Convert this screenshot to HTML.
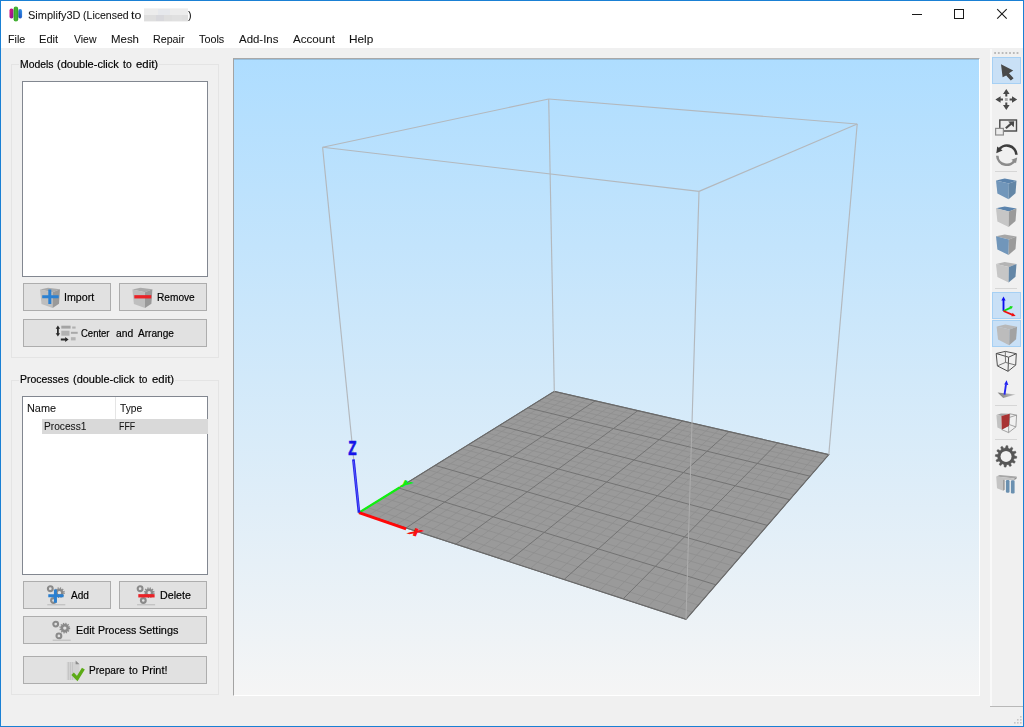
<!DOCTYPE html>
<html lang="en"><head><meta charset="utf-8"><title>Simplify3D</title>
<style>
html,body{margin:0;padding:0;}
body{width:1024px;height:727px;overflow:hidden;background:#f0f0f0;position:relative;font-family:"Liberation Sans",sans-serif;font-size:11.8px;color:#000;}
.abs{position:absolute;}
#win{position:absolute;left:0;top:0;width:1022px;height:725px;border:1px solid #1a80d4;z-index:50;pointer-events:none;}
#top{position:absolute;left:1px;top:1px;width:1022px;height:47px;background:#fff;}
.t{position:absolute;white-space:nowrap;line-height:14px;height:14px;transform-origin:0 0;z-index:5;}
.seg{color:#141414;-webkit-text-stroke:0.08px #141414;}
.got{color:#000;-webkit-text-stroke:0.2px #000;}
.grp{position:absolute;border:1px solid #e4e4e4;box-sizing:border-box;}
.gmask{position:absolute;background:#f0f0f0;height:3px;}
.list{position:absolute;background:#fff;border:1px solid #828790;box-sizing:border-box;}
.btn{position:absolute;background:#e1e1e1;border:1px solid #adadad;box-sizing:border-box;height:28px;}
#vp{position:absolute;left:233px;top:58px;width:747px;height:638px;box-sizing:border-box;border-left:1px solid #a3a3a3;border-top:1px solid #a8a8a8;border-right:1px solid #fff;border-bottom:1px solid #fff;background:linear-gradient(to bottom,#aeddff 0%,#f5f5f5 100%);overflow:hidden;}
#vp svg.gl{position:absolute;left:0;top:0;}
svg{overflow:visible;}

</style></head>
<body>
<div id="top"></div>
<svg class="abs" style="left:0;top:0" width="240" height="30" viewBox="0 0 240 30">
<defs><linearGradient id="gm" x1="0" y1="0" x2="1" y2="1"><stop offset="0" stop-color="#e0107c"/><stop offset="1" stop-color="#7a189a"/></linearGradient><linearGradient id="gb" x1="1" y1="0" x2="0" y2="1"><stop offset="0" stop-color="#38a0f0"/><stop offset="1" stop-color="#1838b0"/></linearGradient><linearGradient id="gg" x1="0" y1="0" x2="1" y2="0"><stop offset="0" stop-color="#2c9c24"/><stop offset="0.5" stop-color="#4cb838"/><stop offset="1" stop-color="#2c9c24"/></linearGradient><filter id="bl" x="-20%" y="-20%" width="140%" height="140%"><feGaussianBlur stdDeviation="0.5"/></filter>
<filter id="bl2" x="-20%" y="-40%" width="140%" height="180%"><feGaussianBlur stdDeviation="0.7"/></filter></defs>
<g filter="url(#bl)">
<rect x="9.5" y="8.6" width="3.9" height="9.9" rx="1.9" fill="url(#gm)"/>
<rect x="18.3" y="9" width="3.8" height="9.5" rx="1.9" fill="url(#gb)"/>
<rect x="13.6" y="6.6" width="4.6" height="14.9" rx="2.3" fill="url(#gg)"/>
</g>
<g filter="url(#bl2)">
<rect x="144" y="8.4" width="44" height="6.8" fill="#ececec"/>
<rect x="144" y="15" width="44" height="6.4" fill="#dedede"/>
<rect x="158" y="9" width="12" height="6" fill="#e6e8ec"/>
<rect x="156" y="15" width="8" height="6" fill="#d8d8dc"/>
<rect x="172" y="15" width="10" height="6" fill="#e0e0e0"/>
</g>
</svg>
<svg class="abs" style="left:905px;top:5px" width="110" height="20" viewBox="905 5 110 20">
<path d="M912 14.5H922" stroke="#1a1a1a" stroke-width="1" fill="none"/>
<rect x="954.5" y="9.5" width="9" height="9" stroke="#1a1a1a" stroke-width="1" fill="none"/>
<path d="M997.2 9.2L1006.7 18.7M1006.7 9.2L997.2 18.7" stroke="#1a1a1a" stroke-width="1.1" fill="none"/>
</svg>

<!-- Models group -->
<div class="grp" style="left:11px;top:64px;width:208px;height:294px"></div>
<div class="gmask" style="left:19px;top:63px;width:140px"></div>
<div class="list" style="left:22px;top:81px;width:186px;height:196px"></div>
<div class="btn" style="left:23px;top:283px;width:88px"></div>
<div class="btn" style="left:119px;top:283px;width:88px"></div>
<div class="btn" style="left:23px;top:319px;width:184px"></div>

<!-- Processes group -->
<div class="grp" style="left:11px;top:380px;width:208px;height:315px"></div>
<div class="gmask" style="left:19px;top:379px;width:156px"></div>
<div class="list" style="left:22px;top:396px;width:186px;height:179px">
 <div class="abs" style="left:92px;top:0;width:1px;height:22px;background:#e5e5e5"></div>
 <div class="abs" style="left:19px;top:22px;width:166px;height:15px;background:#d9d9d9"></div>
</div>
<div class="btn" style="left:23px;top:581px;width:88px"></div>
<div class="btn" style="left:119px;top:581px;width:88px"></div>
<div class="btn" style="left:23px;top:616px;width:184px"></div>
<div class="btn" style="left:23px;top:656px;width:184px"></div>
<svg class="abs" style="left:0;top:0;z-index:4" width="232" height="727" viewBox="0 0 232 727">
<defs>
<filter id="ib" x="-10%" y="-10%" width="120%" height="120%"><feGaussianBlur stdDeviation="0.45"/></filter>
<g id="cube">
 <polygon points="0,1.8 8,0 20,1.5 12.6,4.6" fill="#aaaaaa"/>
 <polygon points="0,1.8 12.6,4.6 12.6,20.4 1.5,16.3" fill="#bebebe"/>
 <polygon points="12.6,4.6 20,1.5 19,16 12.6,20.4" fill="#999999"/>
</g>
<g id="gear3" fill="none" stroke="#8a8a8a">
 <circle cx="4" cy="4.3" r="2.4" stroke-width="2.1"/>
 <circle cx="7.2" cy="16.1" r="2.4" stroke-width="2.1"/>
 <circle cx="13.1" cy="8.3" r="3" stroke-width="2.6"/>
 <circle cx="13.1" cy="8.3" r="4.7" stroke-width="1.4" stroke-dasharray="1.2 1.26"/>
 <path d="M1,20.4H19" stroke="#b8b8b8" stroke-width="1"/>
</g>
</defs>
<g filter="url(#ib)">
<!-- import -->
<use href="#cube" x="40" y="287.7"/>
<path d="M49.8,289.4V304M42.2,296.8H58.7" stroke="#2a80d2" stroke-width="3" fill="none"/>
<!-- remove -->
<use href="#cube" x="132.4" y="287.7"/>
<path d="M134.3,296.8H151.3" stroke="#ea2028" stroke-width="3.3" fill="none"/>
<!-- center & arrange -->
<path d="M57.9,325.4l2.2,3.4h-1.3v4.4h1.3l-2.2,3.4l-2.2,-3.4h1.3v-4.4h-1.3z" fill="#2c2c2c"/>
<path d="M60.8,338.6h4.4v-1.5l3.4,2.4l-3.4,2.4v-1.5h-4.4z" fill="#2c2c2c"/>
<rect x="61.3" y="325.7" width="9.3" height="2.9" fill="#a4a4a4"/>
<rect x="61.3" y="330.7" width="8.2" height="5" fill="#b2b2b2"/>
<rect x="72.2" y="326.5" width="3.4" height="2.1" fill="#b0b0b0"/>
<rect x="70.9" y="331.8" width="6.8" height="2" fill="#a8a8a8"/>
<rect x="70.9" y="337.2" width="4.7" height="3.2" fill="#b4b4b4"/>
<!-- add -->
<use href="#gear3" x="46.3" y="584.4"/>
<path d="M55.4,589.5V602.7M48.3,595.8H63.5" stroke="#2a7fd0" stroke-width="3" fill="none"/>
<!-- delete -->
<use href="#gear3" x="136.1" y="584.4"/>
<path d="M138.3,595.8H154.6" stroke="#ea2028" stroke-width="3.3" fill="none"/>
<!-- edit -->
<use href="#gear3" x="51.7" y="619.8"/>
<!-- prepare -->
<polygon points="66.8,662 76,662 79.5,665 79.5,679.9 66.8,679.9" fill="#d2d2d2"/>
<path d="M68.5,662V680M70.5,662V680M72.5,662V680" stroke="#c2c2c2" stroke-width="0.8"/>
<polygon points="75.6,660.4 79.6,664.2 75.6,664.2" fill="#8c8c8c"/>
<path d="M72.6,673.8L77.2,678.6L83.4,668.6" stroke="#5cab18" stroke-width="3.4" fill="none" stroke-linejoin="miter"/>
</g>
</svg>

<div class="t seg" style="left:27.65px;top:8px;transform:scaleX(0.9310)">Simplify3D</div>
<div class="t seg" style="left:82.78px;top:8px;transform:scaleX(0.8939)">(Licensed</div>
<div class="t seg" style="left:131.06px;top:8px;transform:scaleX(1.0505)">to</div>
<div class="t seg" style="left:187.60px;top:8px;transform:scaleX(0.9174)">)</div>
<div class="t seg" style="left:7.99px;top:32px;transform:scaleX(0.9068)">File</div>
<div class="t seg" style="left:39.46px;top:32px;transform:scaleX(0.9427)">Edit</div>
<div class="t seg" style="left:73.56px;top:32px;transform:scaleX(0.8848)">View</div>
<div class="t seg" style="left:110.63px;top:32px;transform:scaleX(0.9690)">Mesh</div>
<div class="t seg" style="left:152.69px;top:32px;transform:scaleX(0.9060)">Repair</div>
<div class="t seg" style="left:198.89px;top:32px;transform:scaleX(0.9180)">Tools</div>
<div class="t seg" style="left:238.88px;top:32px;transform:scaleX(0.9695)">Add-Ins</div>
<div class="t seg" style="left:292.87px;top:32px;transform:scaleX(0.9838)">Account</div>
<div class="t seg" style="left:348.80px;top:32px;transform:scaleX(1.0029)">Help</div>
<div class="t got" style="left:19.82px;top:57px;transform:scaleX(0.8818)">Models</div>
<div class="t got" style="left:56.75px;top:57px;transform:scaleX(0.9333)">(double-click</div>
<div class="t got" style="left:123.30px;top:57px;transform:scaleX(0.8772)">to</div>
<div class="t got" style="left:135.83px;top:57px;transform:scaleX(0.9638)">edit)</div>
<div class="t got" style="left:63.87px;top:290px;transform:scaleX(0.9020)">Import</div>
<div class="t got" style="left:156.74px;top:290px;transform:scaleX(0.8597)">Remove</div>
<div class="t got" style="left:80.95px;top:326px;transform:scaleX(0.8054)">Center</div>
<div class="t got" style="left:116.20px;top:326px;transform:scaleX(0.8735)">and</div>
<div class="t got" style="left:137.99px;top:326px;transform:scaleX(0.8576)">Arrange</div>
<div class="t got" style="left:20.01px;top:372px;transform:scaleX(0.8875)">Processes</div>
<div class="t got" style="left:72.96px;top:372px;transform:scaleX(0.9287)">(double-click</div>
<div class="t got" style="left:139.21px;top:372px;transform:scaleX(0.8556)">to</div>
<div class="t got" style="left:151.63px;top:372px;transform:scaleX(0.9638)">edit)</div>
<div class="t seg" style="left:26.78px;top:401px;transform:scaleX(0.9229)">Name</div>
<div class="t seg" style="left:120.20px;top:401px;transform:scaleX(0.8639)">Type</div>
<div class="t seg" style="left:44.44px;top:419px;transform:scaleX(0.8621)">Process1</div>
<div class="t seg" style="left:118.75px;top:419px;transform:scaleX(0.7480)">FFF</div>
<div class="t got" style="left:71.19px;top:588px;transform:scaleX(0.8552)">Add</div>
<div class="t got" style="left:160.19px;top:588px;transform:scaleX(0.9067)">Delete</div>
<div class="t got" style="left:75.59px;top:623px;transform:scaleX(0.9116)">Edit</div>
<div class="t got" style="left:97.50px;top:623px;transform:scaleX(0.8971)">Process</div>
<div class="t got" style="left:139.35px;top:623px;transform:scaleX(0.9242)">Settings</div>
<div class="t got" style="left:88.75px;top:663px;transform:scaleX(0.8539)">Prepare</div>
<div class="t got" style="left:129.10px;top:663px;transform:scaleX(0.8880)">to</div>
<div class="t got" style="left:141.67px;top:663px;transform:scaleX(0.9276)">Print!</div>
<div id="vp">
<div class="abs" style="left:0;top:0;width:100%;height:1px;background:rgba(90,110,130,0.28);z-index:3"></div>
<svg class="gl" width="745" height="636" viewBox="234 59 745 636">
<polygon points="359.0,512.6 686.0,619.3 828.8,454.6 554.3,391.4" fill="#9a9a9a"/>
<path d="M368.2,515.6 L562.3,393.3 M367.2,507.5 L692.2,612.1 M377.5,518.6 L570.5,395.1 M375.3,502.5 L698.4,605.1 M386.9,521.7 L578.6,397.0 M383.2,497.6 L704.3,598.2 M396.5,524.8 L586.9,398.9 M391.0,492.7 L710.2,591.4 M415.8,531.1 L603.6,402.7 M406.2,483.3 L721.5,578.3 M425.6,534.3 L612.0,404.7 M413.6,478.7 L727.1,572.0 M435.6,537.6 L620.6,406.7 M420.8,474.2 L732.4,565.7 M445.6,540.9 L629.2,408.6 M428.0,469.8 L737.7,559.6 M466.1,547.5 L646.6,412.7 M441.9,461.2 L748.0,547.8 M476.5,550.9 L655.4,414.7 M448.7,456.9 L753.0,542.0 M487.0,554.4 L664.4,416.7 M455.4,452.8 L757.9,536.4 M497.6,557.8 L673.3,418.8 M461.9,448.7 L762.7,530.8 M519.3,564.9 L691.6,423.0 M474.8,440.7 L772.0,520.1 M530.3,568.5 L700.8,425.1 M481.0,436.9 L776.6,514.8 M541.4,572.1 L710.1,427.3 M487.2,433.0 L781.0,509.7 M552.7,575.8 L719.5,429.4 M493.3,429.3 L785.4,504.7 M575.6,583.3 L738.6,433.8 M505.1,421.9 L793.9,494.8 M587.3,587.1 L748.2,436.0 M510.9,418.3 L798.1,490.1 M599.1,590.9 L758.0,438.3 M516.6,414.8 L802.1,485.4 M611.1,594.9 L767.8,440.6 M522.3,411.3 L806.1,480.7 M635.4,602.8 L787.8,445.2 M533.3,404.5 L814.0,471.7 M647.8,606.8 L797.9,447.5 M538.6,401.1 L817.8,467.3 M660.4,610.9 L808.1,449.8 M543.9,397.8 L821.5,463.0 M673.1,615.1 L818.4,452.2 M549.2,394.6 L825.2,458.8" stroke="#8e8e8e" stroke-width="0.75" fill="none"/>
<path d="M359.0,512.6 L554.3,391.4 M359.0,512.6 L686.0,619.3 M406.1,528.0 L595.2,400.8 M398.7,488.0 L715.9,584.8 M455.8,544.2 L637.9,410.6 M435.0,465.4 L742.9,553.6 M508.4,561.3 L682.4,420.9 M468.4,444.7 L767.4,525.4 M564.1,579.5 L729.0,431.6 M499.3,425.6 L789.7,499.7 M623.2,598.8 L777.7,442.8 M527.8,407.8 L810.1,476.2 M686.0,619.3 L828.8,454.6 M554.3,391.4 L828.8,454.6" stroke="#737373" stroke-width="1" fill="none"/>
<polygon points="359.0,512.6 686.0,619.3 828.8,454.6 554.3,391.4" fill="none" stroke="#6a6a6a" stroke-width="1.1"/>
<line x1="322.6" y1="147.3" x2="548.7" y2="99.0" stroke="#b3b8bd" stroke-width="1.15"/>
<line x1="548.7" y1="99.0" x2="857.2" y2="124.0" stroke="#b3b8bd" stroke-width="1.15"/>
<line x1="857.2" y1="124.0" x2="699.0" y2="191.4" stroke="#b3b8bd" stroke-width="1.15"/>
<line x1="699.0" y1="191.4" x2="322.6" y2="147.3" stroke="#b3b8bd" stroke-width="1.15"/>
<line x1="322.6" y1="147.3" x2="359.0" y2="512.6" stroke="#b3b8bd" stroke-width="1.15"/>
<line x1="548.7" y1="99.0" x2="554.3" y2="391.4" stroke="#b3b8bd" stroke-width="1.15"/>
<line x1="857.2" y1="124.0" x2="828.8" y2="454.6" stroke="#b3b8bd" stroke-width="1.15"/>
<line x1="699.0" y1="191.4" x2="692.0" y2="423.1" stroke="#b3b8bd" stroke-width="1.15"/>
<line x1="692.0" y1="423.1" x2="686.0" y2="619.3" stroke="#adadad" stroke-width="1"/>
<line x1="359.0" y1="512.6" x2="399.6" y2="487.5" stroke="#10f010" stroke-width="2.2"/>
<line x1="359.0" y1="512.6" x2="406.1" y2="528.9" stroke="#ff0808" stroke-width="3"/>
<line x1="359.0" y1="512.6" x2="353.4" y2="459.3" stroke="#2222ee" stroke-width="2.7"/>
<line x1="358.9" y1="510.0" x2="353.5" y2="461.0" stroke="#6a6af4" stroke-width="0.7"/>
<text x="0" y="0" transform="translate(348.3,455.3) scale(0.65,1)" font-family="Liberation Sans, sans-serif" font-weight="bold" font-size="21" fill="#1414e8" stroke="#1414e8" stroke-width="0.6">Z</text>
<text x="0" y="0" transform="matrix(1.124,0.375,-1.103,0.684,397.5,485.2)" font-family="Liberation Sans, sans-serif" font-weight="bold" font-size="10" fill="#10ee10" stroke="#10ee10" stroke-width="0.9">Y</text>
<text x="0" y="0" transform="matrix(1.124,0.375,-1.103,0.684,408,533.2)" font-family="Liberation Sans, sans-serif" font-weight="bold" font-size="10" fill="#f81010" stroke="#f81010" stroke-width="1">X</text>
</svg>
</div>
<div class="abs" style="left:990px;top:49px;width:2px;height:657px;background:#f9f9f9"></div>
<div class="abs" style="left:990px;top:706px;width:33px;height:1px;background:#b8b8b8"></div>
<div class="abs" style="left:992px;top:57px;width:29px;height:27px;box-sizing:border-box;background:#c9e0f6;border:1px solid #a6d0f4"></div>
<div class="abs" style="left:992px;top:292px;width:29px;height:27px;box-sizing:border-box;background:#c9e0f6;border:1px solid #a6d0f4"></div>
<div class="abs" style="left:992px;top:320px;width:29px;height:27px;box-sizing:border-box;background:#c9e0f6;border:1px solid #a6d0f4"></div>
<div class="abs" style="left:995px;top:171px;width:22px;height:1px;background:#d6d6d6"></div>
<div class="abs" style="left:995px;top:288px;width:22px;height:1px;background:#d6d6d6"></div>
<div class="abs" style="left:995px;top:405px;width:22px;height:1px;background:#d6d6d6"></div>
<div class="abs" style="left:995px;top:439px;width:22px;height:1px;background:#d6d6d6"></div>
<svg class="abs" style="left:984px;top:48px" width="40" height="679" viewBox="984 48 40 679">
<defs><filter id="tb" x="-10%" y="-10%" width="120%" height="120%"><feGaussianBlur stdDeviation="0.4"/></filter></defs>
<rect x="994.2" y="52.1" width="1.8" height="1.8" fill="#b4b4b4"/><rect x="997.9" y="52.1" width="1.8" height="1.8" fill="#b4b4b4"/><rect x="1001.7" y="52.1" width="1.8" height="1.8" fill="#b4b4b4"/><rect x="1005.4" y="52.1" width="1.8" height="1.8" fill="#b4b4b4"/><rect x="1009.1" y="52.1" width="1.8" height="1.8" fill="#b4b4b4"/><rect x="1012.9" y="52.1" width="1.8" height="1.8" fill="#b4b4b4"/><rect x="1016.6" y="52.1" width="1.8" height="1.8" fill="#b4b4b4"/>
<rect x="1020" y="722" width="1.6" height="1.6" fill="#c6c6c6"/>
<rect x="1017" y="722" width="1.6" height="1.6" fill="#c6c6c6"/>
<rect x="1014" y="722" width="1.6" height="1.6" fill="#c6c6c6"/>
<rect x="1020" y="719" width="1.6" height="1.6" fill="#c6c6c6"/>
<rect x="1017" y="719" width="1.6" height="1.6" fill="#c6c6c6"/>
<rect x="1020" y="716" width="1.6" height="1.6" fill="#c6c6c6"/>
<g filter="url(#tb)">
<path d="M1001,64.2 L1013.2,70.4 L1009,73.2 L1013.6,78.2 L1010.8,80.4 L1006.2,75.4 L1002.6,77.2 Z" fill="#484848"/>
<path d="M1006.3,88.9l3.3,5.2h-2.3v2.4h-2v-2.4h-2.3z" fill="#484848"/>
<path d="M1006.3,110.1l3.3,-5.2h-2.3v-2.4h-2v2.4h-2.3z" fill="#484848"/>
<path d="M995.4,99.5l5.2,-3.3v2.3h2.4v2h-2.4v2.3z" fill="#484848"/>
<path d="M1017.2,99.5l-5.2,-3.3v2.3h-2.4v2h2.4v2.3z" fill="#484848"/>
<rect x="1004.9" y="98.1" width="2.8" height="2.8" fill="#a8a8a8"/>
<rect x="999.8" y="120" width="16.7" height="11" fill="#eeeeee" stroke="#484848" stroke-width="1.4"/>
<rect x="995.6" y="128.4" width="7.8" height="6.6" fill="#ececec" stroke="#8c8c8c" stroke-width="1.2"/>
<path d="M1005.8,128.2L1011.2,123.6" stroke="#484848" stroke-width="2.1" fill="none"/>
<polygon points="1008.2,121.4 1014.2,121.2 1013.8,127.2" fill="#484848"/>
<path d="M998.54,150.40 A9.6,9.6 0 0 1 1016.44,154.70" stroke="#3e3e3e" stroke-width="2.6" fill="none"/>
<path d="M997.26,155.70 A9.6,9.6 0 0 0 1015.16,160.00" stroke="#8c8c8c" stroke-width="2.6" fill="none"/>
<polygon points="997.2,146.6 1002.6,150.6 996.3,153.2" fill="#3e3e3e"/>
<polygon points="1017.2,157.4 1011.4,159.8 1016,163.2" fill="#8c8c8c"/>
<polygon points="996.0,180.5 1004.7,178.6 1016.5,180.7 1008.9,183.6" fill="#5b84ad"/><polygon points="996.0,180.5 1008.9,183.6 1008.6,199.2 997.4,193.6" fill="#7196ba"/><polygon points="1008.9,183.6 1016.5,180.7 1015.5,193.3 1008.6,199.2" fill="#6486a6"/>
<polygon points="996.0,208.3 1004.7,206.4 1016.5,208.5 1008.9,211.4" fill="#5b84ad"/><polygon points="996.0,208.3 1008.9,211.4 1008.6,227.0 997.4,221.4" fill="#c6c6c6"/><polygon points="1008.9,211.4 1016.5,208.5 1015.5,221.1 1008.6,227.0" fill="#9a9a9a"/>
<polygon points="996.0,236.3 1004.7,234.4 1016.5,236.5 1008.9,239.4" fill="#a6a6a6"/><polygon points="996.0,236.3 1008.9,239.4 1008.6,255.0 997.4,249.4" fill="#7196ba"/><polygon points="1008.9,239.4 1016.5,236.5 1015.5,249.1 1008.6,255.0" fill="#9a9a9a"/>
<polygon points="996.0,263.9 1004.7,262.0 1016.5,264.1 1008.9,267.0" fill="#b4b4b4"/><polygon points="996.0,263.9 1008.9,267.0 1008.6,282.6 997.4,277.0" fill="#c6c6c6"/><polygon points="1008.9,267.0 1016.5,264.1 1015.5,276.7 1008.6,282.6" fill="#6486a6"/>
<path d="M1003.5,311V299" stroke="#1010f0" stroke-width="1.8"/><polygon points="1003.5,296.4 1005.6,300.6 1001.4,300.6" fill="#1010f0"/>
<path d="M1003.5,311L1010.4,307.9" stroke="#10e010" stroke-width="1.8"/><polygon points="1013,306.6 1009.6,306 1010.8,309.6" fill="#10e010"/>
<path d="M1003.5,311L1012.6,314.8" stroke="#f01010" stroke-width="1.8"/><polygon points="1015.6,316 1012.6,312.8 1011.4,316.2" fill="#f01010"/>
<polygon points="996.6,326.5 1005.3,324.6 1017.1,326.7 1009.5,329.6" fill="#b8b8b8"/><polygon points="996.6,326.5 1009.5,329.6 1009.2,345.2 998.0,339.6" fill="#bcbcbc"/><polygon points="1009.5,329.6 1017.1,326.7 1016.1,339.3 1009.2,345.2" fill="#a2a2a2"/>
<g stroke="#505050" stroke-width="1" fill="none" stroke-linejoin="round">
<polygon points="996.2,353.5 1005.3,351.4 1016.3,353.7 1008.6,357.2"/>
<path d="M996.2,353.5 L997.4,365.9 L1008,371.3 L1015.7,365.1 M1008.6,357.2 L1008,371.3"/>
<path d="M1016.3,353.7 L1015.7,365.1"/>
<path d="M1005.3,351.4 L1005.5,362.4 L997.4,365.9 M1005.5,362.4 L1015.7,365.1" stroke="#6a6a6a" stroke-width="0.9"/>
</g>
<defs><linearGradient id="pl" x1="0" x2="1" y1="0" y2="0"><stop offset="0" stop-color="#7c7c7c"/><stop offset="1" stop-color="#c8c8c8"/></linearGradient></defs>
<polygon points="997.6,392.4 1015.6,394.4 1003.2,398" fill="url(#pl)"/>
<path d="M1004.5,394.6L1006,384.4" stroke="#2828f0" stroke-width="1.9"/><polygon points="1006.5,380.2 1008.3,385 1004.2,384.4" fill="#2020f0"/>
<polygon points="996.4,415 1001,413.4 1009.6,413.8 1001.4,416" fill="#a4a4a4"/>
<polygon points="996.4,415 1001.4,416 1001.8,429.6 997.4,427.6" fill="#c2c2c2"/>
<g stroke="#8e8e8e" stroke-width="0.8" fill="none"><path d="M1009.7,413.8L1016.6,415.1L1015.9,426.9L1008.6,432.6L1001.8,429.6M1008.8,417.6L1008.6,432.6M1016.6,415.1L1008.8,417.6M1009.7,413.8L1009.4,424.6L1015.9,426.9M1009.4,424.6L1001.8,429.6"/></g>
<polygon points="1001.4,415.9 1009.7,413.8 1008.9,426.1 1001.8,429.6" fill="#a83030"/>
<path d="M1005.47,448.12 L1006.14,445.70 L1007.82,445.85 L1008.06,448.35 L1009.69,448.94 L1011.48,447.18 L1012.86,448.14 L1011.82,450.43 L1012.93,451.76 L1015.36,451.13 L1016.07,452.65 L1014.03,454.11 L1014.33,455.82 L1016.75,456.49 L1016.60,458.17 L1014.10,458.41 L1013.51,460.04 L1015.27,461.83 L1014.31,463.21 L1012.02,462.17 L1010.69,463.28 L1011.32,465.71 L1009.80,466.42 L1008.34,464.38 L1006.63,464.68 L1005.96,467.10 L1004.28,466.95 L1004.04,464.45 L1002.41,463.86 L1000.62,465.62 L999.24,464.66 L1000.28,462.37 L999.17,461.04 L996.74,461.67 L996.03,460.15 L998.07,458.69 L997.77,456.98 L995.35,456.31 L995.50,454.63 L998.00,454.39 L998.59,452.76 L996.83,450.97 L997.79,449.59 L1000.08,450.63 L1001.41,449.52 L1000.78,447.09 L1002.30,446.38 L1003.76,448.42Z" fill="#565656" stroke="#565656" stroke-width="0.6" stroke-linejoin="round"/>
<circle cx="1006.05" cy="456.4" r="5.5" fill="#f0f0f0"/>
<polygon points="996.2,476.6 999.7,475 1016.6,476.6 1014.4,478.4" fill="#a6a6a6"/>
<polygon points="996.2,476.6 1014.4,478.4 1014.4,480.2 1003.2,479.8 1003.2,490.8 997,488.2" fill="#c4c4c4"/>
<polygon points="1014.4,478.4 1016.6,476.6 1016.6,478.6 1014.4,480.2" fill="#8e8e8e"/>
<polygon points="1003.2,479.8 1004.6,479.8 1004.6,489.8 1003.2,490.8" fill="#8e8e8e"/>
<rect x="1005.9" y="480" width="3.6" height="12.7" rx="1.2" fill="#6b90b0"/>
<rect x="1010.9" y="480.2" width="3.7" height="13.2" rx="1.2" fill="#6b90b0"/>
</g></svg>
<div id="win"></div>

</body></html>
